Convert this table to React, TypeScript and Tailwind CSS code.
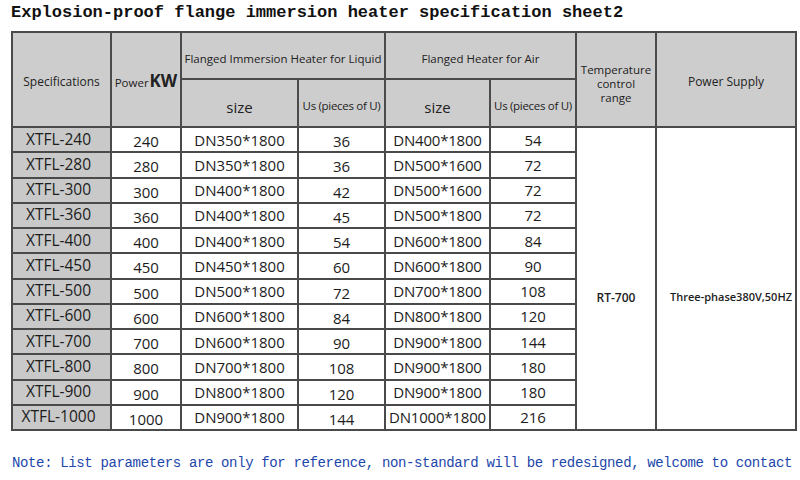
import React from "react";

const rows: [string, string, string, string, string, string][] = [
  ["XTFL-240", "240", "DN350*1800", "36", "DN400*1800", "54"],
  ["XTFL-280", "280", "DN350*1800", "36", "DN500*1600", "72"],
  ["XTFL-300", "300", "DN400*1800", "42", "DN500*1600", "72"],
  ["XTFL-360", "360", "DN400*1800", "45", "DN500*1800", "72"],
  ["XTFL-400", "400", "DN400*1800", "54", "DN600*1800", "84"],
  ["XTFL-450", "450", "DN450*1800", "60", "DN600*1800", "90"],
  ["XTFL-500", "500", "DN500*1800", "72", "DN700*1800", "108"],
  ["XTFL-600", "600", "DN600*1800", "84", "DN800*1800", "120"],
  ["XTFL-700", "700", "DN600*1800", "90", "DN900*1800", "144"],
  ["XTFL-800", "800", "DN700*1800", "108", "DN900*1800", "180"],
  ["XTFL-900", "900", "DN800*1800", "120", "DN900*1800", "180"],
  ["XTFL-1000", "1000", "DN900*1800", "144", "DN1000*1800", "216"],
];

export default function App() {
  const cell = "border-2 border-[#4a4a4a] text-center align-middle p-0";
  const hdr = cell + " bg-[#cdcdcd] text-[#222] leading-[14px] font-normal";
  return (
    <div className="w-[800px] h-[480px] bg-white flex flex-col overflow-hidden" style={{ fontFamily: '"Open Sans", "Noto Sans", sans-serif' }}>
      <div className="pl-[11px] pt-[2px] h-[31px] text-[17px] font-bold text-[#111] leading-[22px]" style={{ fontFamily: '"Liberation Mono", monospace' }}>
        Explosion-proof flange immersion heater specification sheet2
      </div>
      <div className="pl-[11px]">
        <table className="border-collapse table-fixed w-[784px]">
          <colgroup>
            <col className="w-[99px]" />
            <col className="w-[70px]" />
            <col className="w-[117px]" />
            <col className="w-[87px]" />
            <col className="w-[105px]" />
            <col className="w-[86px]" />
            <col className="w-[80px]" />
            <col className="w-[140px]" />
          </colgroup>
          <thead>
            <tr className="h-[47px]">
              <th rowSpan={2} className={hdr + " text-[12px] pt-[4px]"}>Specifications</th>
              <th rowSpan={2} className={hdr + " pt-[4px]"}>
                <span className="text-[11.5px]">Power</span>
                <span className="text-[17px] font-bold ml-[1px]">KW</span>
              </th>
              <th colSpan={2} className={hdr + " text-[11.5px] pt-[6px]"}>Flanged Immersion Heater for Liquid</th>
              <th colSpan={2} className={hdr + " text-[11.5px] pt-[6px]"}>Flanged Heater for Air</th>
              <th rowSpan={2} className={hdr + " text-[11.5px]"}>
                <div className="pt-[8px]">Temperature<br />control<br />range</div>
              </th>
              <th rowSpan={2} className={hdr + " text-[12px] pt-[4px]"}>Power Supply</th>
            </tr>
            <tr className="h-[48px]">
              <th className={hdr + " text-[15px] pt-[8px]"}>size</th>
              <th className={hdr + " text-[11.5px] pt-[6px] tracking-[-0.3px]"}>Us (pieces of U)</th>
              <th className={hdr + " text-[15px] pt-[8px]"}>size</th>
              <th className={hdr + " text-[11.5px] pt-[6px] tracking-[-0.3px]"}>Us (pieces of U)</th>
            </tr>
          </thead>
          <tbody className="text-[15px] text-[#1c1c1c]">
            {rows.map((r, i) => (
              <tr key={r[0]} className="h-[25.25px]">
                <td className={cell + " bg-[#c9c9c9] text-[15.5px] leading-[20px] pb-[2px] pr-[6px]"}>{r[0]}</td>
                <td className={cell + " leading-[20px] pt-[3px]"}>{r[1]}</td>
                <td className={cell + " leading-[20px]"}>{r[2]}</td>
                <td className={cell + " leading-[20px] pt-[3px]"}>{r[3]}</td>
                <td className={cell + " leading-[20px] tracking-[-0.2px]"}>{r[4]}</td>
                <td className={cell + " leading-[20px]"}>{r[5]}</td>
                {i === 0 && (
                  <>
                    <td rowSpan={12} className={cell + " text-[12px] font-semibold pt-[38px]"}>RT-700</td>
                    <td rowSpan={12} className={cell + " text-[11px] font-semibold text-right pr-[3px] pt-[38px]"}>Three-phase380V,50HZ</td>
                  </>
                )}
              </tr>
            ))}
          </tbody>
        </table>
      </div>
      <div className="pl-[12px] mt-[23px] text-[14px] tracking-[-0.36px] text-[#1d46ab] leading-[18px]" style={{ fontFamily: '"Liberation Mono", monospace' }}>
        Note: List parameters are only for reference, non-standard will be redesigned, welcome to contact
      </div>
    </div>
  );
}
